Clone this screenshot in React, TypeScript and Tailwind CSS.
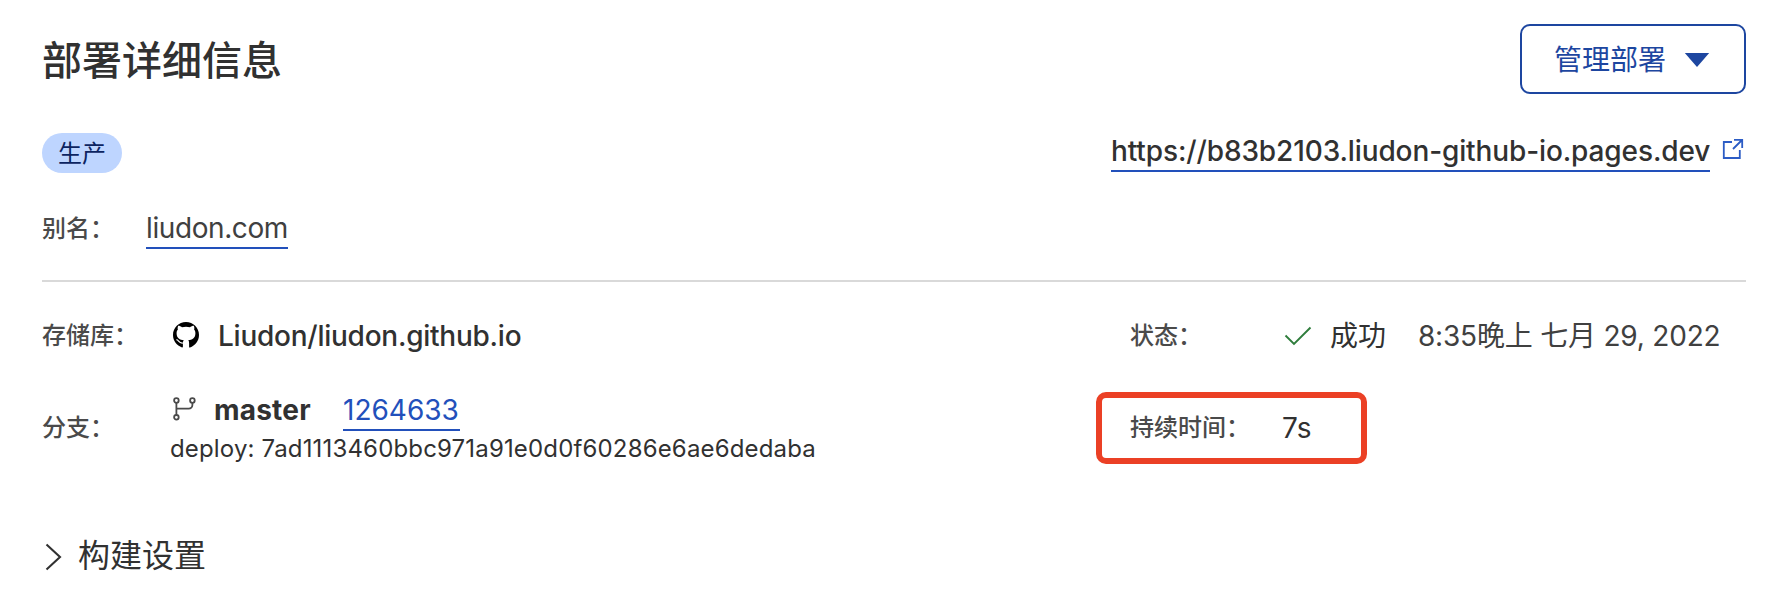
import type { ReactNode } from "react";

function Label({ children, className = "" }: { children: ReactNode; className?: string }) {
  return (
    <span className={`shrink-0 whitespace-nowrap text-2xl/9 font-medium text-[#4a4a4a] ${className}`}>
      {children}
    </span>
  );
}

function GithubIcon() {
  return (
    <svg viewBox="0 0 26 26" className="h-[26px] w-[26px] shrink-0" fill="#000">
      <path d="M13 0C5.8 0 0 5.8 0 13c0 5.8 3.8 10.7 9 12.4.6.1.9-.3.9-.6v-4.300c0-1 .4-1.800.9-2.300C7 17.800 3.600 16.300 3.600 11.200c0-1.500.5-2.700 1.300-3.600-.2-.6-.5-1.900.2-3.700 1-.2 2.300.4 3.900 1.400a14 14 0 0 1 8 0c1.600-1 2.900-1.600 3.900-1.400.7 1.800.4 3.100.2 3.700.8.9 1.300 2.100 1.300 3.600 0 5.100-3.400 6.600-7.200 7 .6.5.9 1.400.9 2.700v4c0 .3.3.7.9.6C22.200 23.700 26 18.800 26 13 26 5.800 20.200 0 13 0z" />
      <path d="M3.400 17.700c2.600.1 2 3.900 6.500 3.300" fill="none" stroke="#fff" strokeWidth="1.200" />
    </svg>
  );
}

function BranchIcon() {
  return (
    <svg viewBox="0 0 24 24" className="h-6 w-6 shrink-0" fill="none" stroke="#4a4a4a" strokeWidth="1.8">
      <circle cx="3.400" cy="3.500" r="2.300" />
      <circle cx="19.400" cy="3.500" r="2.300" />
      <circle cx="3.400" cy="20.300" r="2.300" />
      <path d="M3.400 6v12M3.400 11.700h12.300a3.700 3.700 0 0 0 3.700-3.700V6" />
    </svg>
  );
}

function ExternalIcon() {
  return (
    <svg viewBox="0 0 22 22" className="h-[22px] w-[22px] shrink-0" fill="none" stroke="#2c5cc5" strokeWidth="1.8">
      <path d="M10 4H1.800v16h16v-8M12 1.800h8.200V10M20 2 11 11" />
    </svg>
  );
}

export default function App() {
  return (
    <main className="flex h-[610px] w-[1792px] flex-col overflow-hidden bg-white pr-[46px] pl-[42px] font-['Inter','Noto_Sans_CJK_SC',sans-serif] text-[#313131]">
      <header className="flex h-[94px] shrink-0 items-end justify-between">
        <h1 className="mb-[3px] text-[40px]/[60px] font-medium">部署详细信息</h1>
        <button className="flex h-[70px] w-[226px] items-center rounded-[10px] border-2 border-[#1d46a0] pt-[2px] pl-8 text-[28px]/10 text-[#1d46a0]">
          管理部署
          <svg viewBox="0 0 26 14" className="mb-px ml-[18px] h-[14px] w-[26px]" fill="#1d46a0">
            <path d="M.8 0h24.400L13 14z" />
          </svg>
        </button>
      </header>

      <section className="flex h-[79px] shrink-0 items-end justify-between">
        <span className="flex h-10 w-20 items-center justify-center rounded-full bg-[#bed5ff] pt-[2px] text-2xl/9 text-[#0c2461]">
          生产
        </span>
        <div className="mb-px flex items-center">
          <a className="block h-[40px] w-[599px] border-b-2 border-[#2250bb] pt-px text-[28px]/[36px] font-medium tracking-[-0.12px] whitespace-nowrap" href="#">
            https://b83b2103.liudon-github-io.pages.dev
          </a>
          <div className="mr-[2px] mb-[6px] ml-[12px]">
            <ExternalIcon />
          </div>
        </div>
      </section>

      <section className="flex h-[109px] shrink-0 items-start border-b-2 border-[#d9d9d9] pt-[36px]">
        <Label className="mt-[2px] w-[104px]">别名：</Label>
        <a className="block h-[40px] w-[142px] border-b-2 border-[#2250bb] pt-px text-[28px]/[36px] tracking-[-0.4px] whitespace-nowrap text-[#404040]" href="#">
          liudon.com
        </a>
      </section>

      <section className="flex h-[182px] shrink-0">
        <div className="flex w-[1054px] flex-col">
          <div className="mt-[36px] flex h-[36px] items-center">
            <Label className="w-[131px]">存储库：</Label>
            <div className="mb-[2px]">
              <GithubIcon />
            </div>
            <span className="ml-[19px] text-[28px]/[36px] font-medium tracking-[-0.25px]">Liudon/liudon.github.io</span>
          </div>
          <div className="mt-[37px] flex items-center">
            <Label className="mb-[2px] w-[128px]">分支：</Label>
            <div className="flex flex-col">
              <div className="flex items-start">
                <div className="mt-[6px] ml-[3px]">
                  <BranchIcon />
                </div>
                <span className="ml-[17px] w-[129px] pt-px text-[28px]/[36px] font-bold tracking-[0.2px]">master</span>
                <a className="block h-[40px] w-[117px] border-b-2 border-[#2250bb] pt-px text-[28px]/[36px] whitespace-nowrap text-[#2250bb]" href="#">
                  1264633
                </a>
              </div>
              <span className="text-2xl/9 tracking-[0.16px] whitespace-nowrap">
                deploy: 7ad1113460bbc971a91e0d0f60286e6ae6dedaba
              </span>
            </div>
          </div>
        </div>

        <div className="flex flex-1 flex-col">
          <div className="mt-[36px] flex h-[36px] items-center pl-[34px]">
            <Label className="w-[154px]">状态：</Label>
            <svg viewBox="0 0 28 20" className="mb-px h-5 w-7 shrink-0" fill="none" stroke="#2f7d3c" strokeWidth="1.900">
              <path d="M1.500 9.500 10 18 26.500 1.500" />
            </svg>
            <span className="ml-[18px] w-[88px] text-[28px]/[36px]">成功</span>
            <span className="text-[28px]/[36px] tracking-[-0.2px] whitespace-nowrap text-[#404040]">8:35晚上 七月 29, 2022</span>
          </div>
          <div className="mt-[38px] flex h-[72px] w-[271px] items-center rounded-[10px] border-[6px] border-[#eb4025] pl-[28px]">
            <Label className="w-[152px]">持续时间：</Label>
            <span className="text-[28px]/[36px]">7s</span>
          </div>
        </div>
      </section>

      <section className="mt-[67px] flex h-[48px] shrink-0 items-center">
        <svg viewBox="0 0 18 28" className="mt-[3px] ml-[3px] h-7 w-[18px]" fill="none" stroke="#313131" strokeWidth="2.100">
          <path d="M1.500 1.500 15 14 1.500 26.500" />
        </svg>
        <span className="ml-[15px] pt-[2px] text-[32px]/[48px]">构建设置</span>
      </section>
    </main>
  );
}
